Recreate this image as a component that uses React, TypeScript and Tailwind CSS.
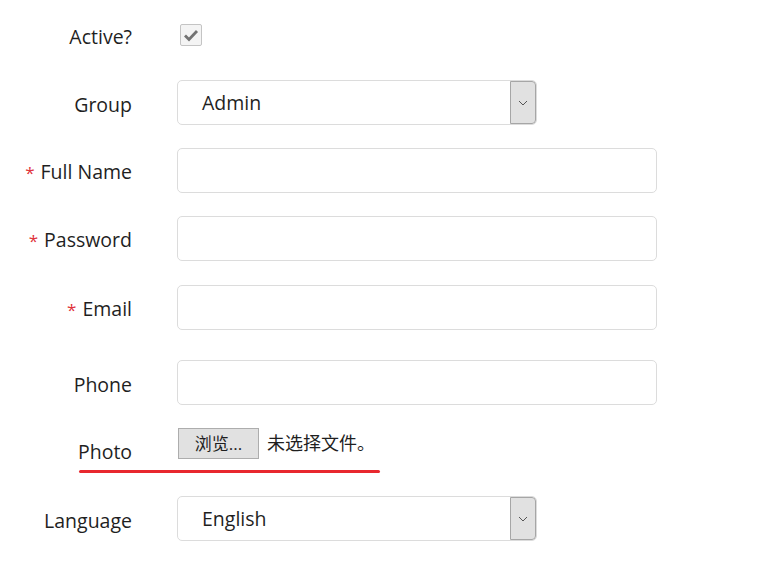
const font = { fontFamily: '"Open Sans", "Noto Sans CJK SC", sans-serif' }

function Label({ text, required = false }: { text: string; required?: boolean }) {
  return (
    <div className="w-[132px] shrink-0 translate-y-[2px] text-right text-[19.5px] leading-6 text-[#1f1f1f]">
      {required && <span className="mr-[6px] text-[17px] text-[#e0323a]">*</span>}
      {text}
    </div>
  )
}

function TextInput() {
  return <div className="h-[45px] w-[480px] rounded-[5px] border border-[#dcdcdc] bg-white" />
}

function Select({ value }: { value: string }) {
  return (
    <div className="flex h-[45px] w-[360px] items-stretch rounded-[5px] border border-[#dcdcdc] bg-white">
      <div className="flex flex-1 items-center pl-[24px] text-[19.5px] text-[#1f1f1f]">{value}</div>
      <div className="flex w-[26px] items-center justify-center rounded-r-[4px] border border-[#a6a6a6] bg-[#e1e1e1]">
        <svg width="10" height="6" viewBox="0 0 10 6">
          <path d="M1 1 L5 5 L9 1" fill="none" stroke="#555" strokeWidth="1" />
        </svg>
      </div>
    </div>
  )
}

export default function App() {
  return (
    <div className="min-h-[570px] w-[757px] bg-white pt-[23px]" style={font}>
      {/* Active */}
      <div className="flex items-center gap-[48px]">
        <Label text="Active?" />
        <div className="flex h-[22px] w-[22px] items-center justify-center rounded-[2px] border border-[#c4c4c4] bg-[#f4f4f4]">
          <svg width="16" height="14" viewBox="0 0 16 14">
            <path d="M2 7.5 L6 11.5 L14 3" fill="none" stroke="#737373" strokeWidth="2.8" />
          </svg>
        </div>
      </div>

      {/* Group */}
      <div className="mt-[33px] flex items-center gap-[45px]">
        <Label text="Group" />
        <Select value="Admin" />
      </div>

      <div className="mt-[23px] flex items-center gap-[45px]">
        <Label text="Full Name" required />
        <TextInput />
      </div>

      <div className="mt-[23px] flex items-center gap-[45px]">
        <Label text="Password" required />
        <TextInput />
      </div>

      <div className="mt-[24px] flex items-center gap-[45px]">
        <Label text="Email" required />
        <TextInput />
      </div>

      <div className="mt-[30px] flex items-center gap-[45px]">
        <Label text="Phone" />
        <TextInput />
      </div>

      {/* Photo */}
      <div className="mt-[23px] flex items-start">
        <div className="mt-[11px] w-[132px] shrink-0 translate-y-[1px] pl-[78px] text-[19.5px] leading-6 text-[#1f1f1f]">Photo</div>
        <div className="ml-[46px] flex items-center gap-[8px]">
          <div className="flex h-[31px] w-[81px] items-center justify-center border border-[#adadad] bg-[#e1e1e1] text-[17px] text-[#1f1f1f]">
            浏览...
          </div>
          <span className="text-[18px] text-[#1f1f1f]">未选择文件。</span>
        </div>
      </div>
      <div className="ml-[79px] mt-[7px] h-[3px] w-[301px] rounded-full bg-[#e8282e]" />

      {/* Language */}
      <div className="mt-[23px] flex items-center gap-[45px]">
        <Label text="Language" />
        <Select value="English" />
      </div>
    </div>
  )
}
